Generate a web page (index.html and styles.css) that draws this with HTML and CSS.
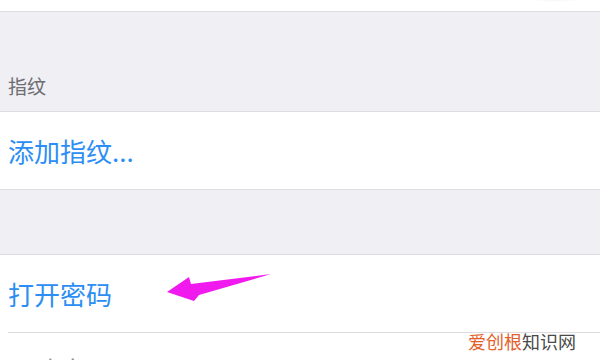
FILE: index.html
```html
<!DOCTYPE html>
<html>
<head>
<meta charset="utf-8">
<link rel="stylesheet" href="styles.css">
</head>
<body>
<div class="screen">
  <div class="top"><div class="shadow"></div></div>
  <div class="gap gap-header"><span class="header">指纹</span></div>
  <div class="group">
    <div class="cell"><span class="link">添加指纹...</span></div>
  </div>
  <div class="gap gap-small"></div>
  <div class="group">
    <div class="cell"><span class="link">打开密码</span></div>
    <div class="sep"></div>
    <div class="cell cell-last"><span class="disabled">更改密码</span></div>
  </div>
  <svg class="arrow" width="120" height="40" viewBox="160 265 120 40">
    <polygon points="167,292 189,277 191,284 271,274 199,295 194,301" fill="#f019ee"/>
  </svg>
  <div class="watermark"><span class="wm-a">爱创根</span><span class="wm-b">知识网</span></div>
</div>
</body>
</html>
```
FILE: styles.css
```css
html, body {
  margin: 0;
  padding: 0;
}
body {
  width: 600px;
  height: 360px;
  overflow: hidden;
  background: #ffffff;
  font-family: "Noto Sans CJK SC", "Noto Sans", sans-serif;
}
.screen {
  position: relative;
  width: 600px;
  height: 360px;
  overflow: hidden;
}
.top {
  position: relative;
  height: 11px;
  background: #ffffff;
  border-bottom: 1px solid #dedee2;
}
.shadow {
  position: absolute;
  right: 10px;
  top: -8px;
  width: 70px;
  height: 10px;
  border-radius: 50%;
  background: radial-gradient(ellipse at center, rgba(0,0,0,0.10), rgba(0,0,0,0) 70%);
}
.gap {
  background: #efeff4;
}
.gap-header {
  height: 99px;
  display: flex;
  align-items: flex-end;
  box-sizing: border-box;
  padding: 0 0 13px 8px;
}
.header {
  font-size: 19px;
  line-height: 24px;
  color: #6d6d72;
}
.gap-small {
  height: 64px;
}
.group {
  background: #ffffff;
  border-top: 1px solid #dedee2;
  border-bottom: 1px solid #dedee2;
}
.cell {
  height: 77px;
  display: flex;
  align-items: center;
  padding-left: 8px;
}
.cell-last {
  align-items: flex-start;
  padding-top: 22px;
  box-sizing: border-box;
}
.link {
  font-size: 26px;
  line-height: 30px;
  color: #2a8ef4;
}
.disabled {
  font-size: 26px;
  line-height: 30px;
  color: #8e8e93;
}
.sep {
  height: 1px;
  margin-left: 8px;
  background: #dcdce0;
}
.arrow {
  position: absolute;
  left: 160px;
  top: 265px;
}
.watermark {
  position: absolute;
  left: 468px;
  top: 330px;
  font-size: 18px;
  line-height: 22px;
  white-space: nowrap;
}
.wm-a {
  color: #e2602a;
}
.wm-b {
  color: #4a4a4a;
}
```
